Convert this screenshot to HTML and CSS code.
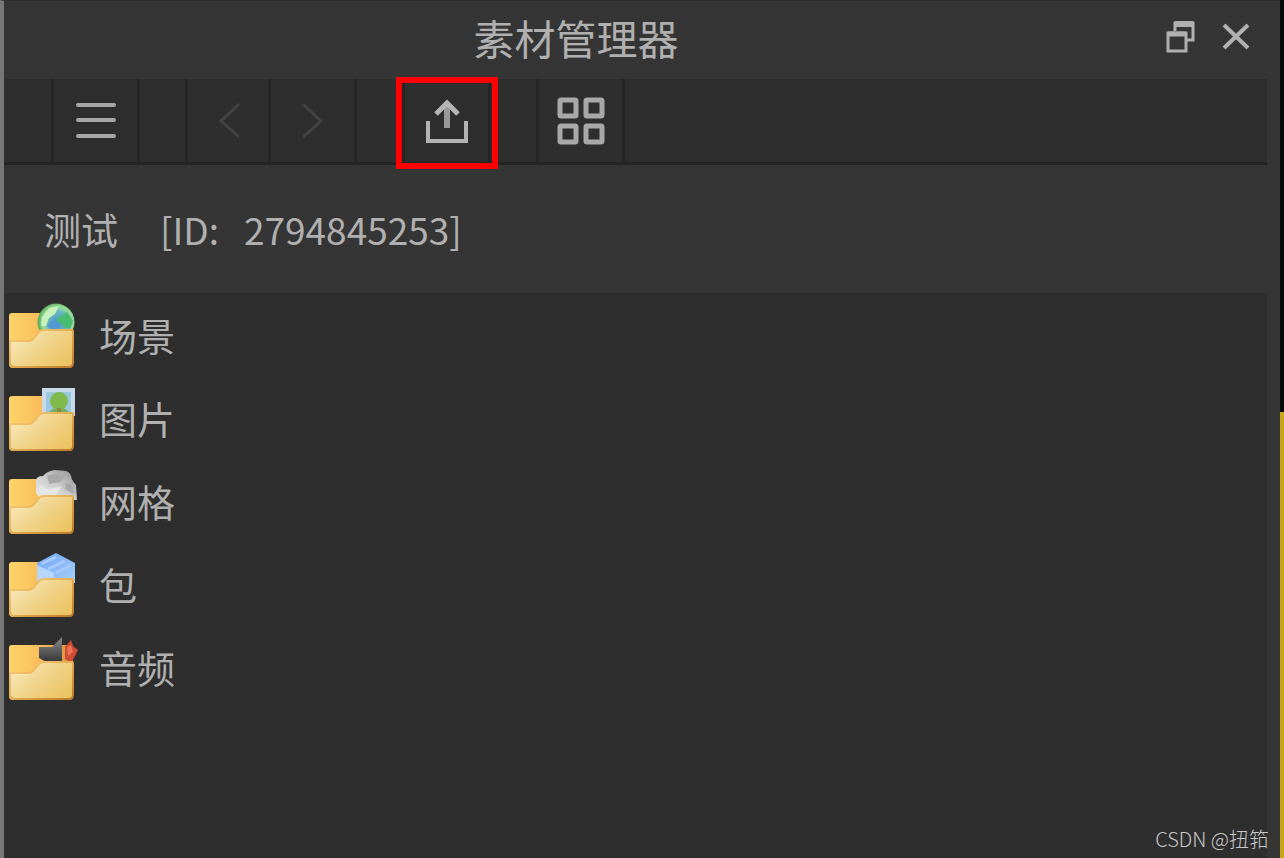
FILE: index.html
```html
<!DOCTYPE html>
<html lang="zh-CN">
<head>
<meta charset="utf-8">
<title>素材管理器</title>
<link rel="stylesheet" href="styles.css">
</head>
<body>
<svg class="defs" aria-hidden="true">
  <defs>
    <linearGradient id="back" x1="0" y1="0" x2="1" y2="0"><stop offset="0" stop-color="#fdd56a"/><stop offset=".5" stop-color="#f9bd59"/><stop offset="1" stop-color="#d98d35"/></linearGradient>
    <linearGradient id="front" x1="0" y1="0" x2="1" y2=".7"><stop offset="0" stop-color="#fbeecb"/><stop offset=".5" stop-color="#f1d690"/><stop offset="1" stop-color="#ecc463"/></linearGradient>
    <linearGradient id="edge" x1="0" y1="0" x2="1" y2="1"><stop offset="0" stop-color="#f7cd7c"/><stop offset=".5" stop-color="#e5ad50"/><stop offset="1" stop-color="#bd7a2a"/></linearGradient>
    <radialGradient id="globe" cx=".55" cy=".5" r=".55"><stop offset="0" stop-color="#4b9ccb"/><stop offset=".5" stop-color="#65b4bd"/><stop offset=".75" stop-color="#9bdd9a"/><stop offset="1" stop-color="#4fa550"/></radialGradient>
    <linearGradient id="stone" x1="0" y1="1" x2="1" y2="0"><stop offset="0" stop-color="#f1f1f1"/><stop offset=".5" stop-color="#cccccc"/><stop offset="1" stop-color="#8f8f8f"/></linearGradient>
    <linearGradient id="box" x1="0" y1="0" x2="1" y2="1"><stop offset="0" stop-color="#6fa5f3"/><stop offset="1" stop-color="#a6cffb"/></linearGradient>
    <linearGradient id="horn" x1="0" y1="0" x2="0" y2="1"><stop offset="0" stop-color="#8a8a8a"/><stop offset="1" stop-color="#333333"/></linearGradient>
    <g id="folder-back"><path d="M4 11h58q3 0 3 3v48q0 4-4 4H5q-4 0-4-4V14q0-3 3-3z" fill="url(#back)"/></g>
    <g id="folder-front"><path d="M2 39h18q4 0 6-3l5-6q2-2 5-2h28q1 0 1 2v31q0 4-4 4H6q-4 0-4-4z" fill="url(#front)" stroke="url(#edge)" stroke-width="2"/></g>
  </defs>
</svg>
<div class="screen">
  <main class="panel">
    <header class="titlebar">
      <h1 class="title">素材管理器</h1>
      <div class="controls">
        <button class="control" type="button" aria-label="还原"><svg width="30" height="34" viewBox="0 0 30 34" fill="none" stroke="#b0b0b0" stroke-width="3"><path d="M9 12V4h18v17h-6"/><path d="M9 5h18" stroke-width="6"/><path d="M2 14h18v18H2z"/><path d="M2 15h18" stroke-width="5"/></svg></button>
        <button class="control" type="button" aria-label="关闭"><svg width="30" height="34" viewBox="0 0 30 34" fill="none" stroke="#b0b0b0" stroke-width="4"><path d="M3 6l24 23M27 6L3 29"/></svg></button>
      </div>
    </header>
    <nav class="toolbar" aria-label="工具栏">
      <span class="spacer"></span>
      <button class="tool" type="button" aria-label="菜单"><svg width="48" height="48" viewBox="0 0 48 48" fill="none" stroke="#a6a6a6" stroke-width="4" stroke-linecap="round"><path d="M6 8h36M6 23h36M6 39h36"/></svg></button>
      <span class="spacer"></span>
      <button class="tool faded" type="button" aria-label="后退"><svg width="48" height="48" viewBox="0 0 48 48" fill="none" stroke="#434343" stroke-width="3"><path d="M35 7L17 24l18 16"/></svg></button>
      <button class="tool" type="button" aria-label="前进"><svg width="48" height="48" viewBox="0 0 48 48" fill="none" stroke="#434343" stroke-width="3"><path d="M14 7l18 17-18 16"/></svg></button>
      <span class="spacer"></span>
      <button class="tool marked" type="button" aria-label="上传"><svg width="48" height="48" viewBox="0 0 48 48" fill="none" stroke="#b4b4b4" stroke-width="5"><path d="M24 31V7" stroke="#999999" stroke-width="6"/><path d="M13 17L24 6l11 11"/><path d="M5 24v20h38V24" stroke-width="4"/></svg></button>
      <span class="spacer"></span>
      <button class="tool" type="button" aria-label="网格视图"><svg width="48" height="48" viewBox="0 0 48 48" fill="none" stroke="#a8a8a8" stroke-width="5"><rect x="3" y="3" width="16" height="16" rx="1"/><rect x="29" y="3" width="16" height="16" rx="1"/><rect x="3" y="29" width="16" height="16" rx="1"/><rect x="29" y="29" width="16" height="16" rx="1"/></svg></button>
    </nav>
    <div class="project"><span>测试</span><span>[ID:&nbsp;&nbsp; 2794845253]</span></div>
    <ul class="assets">
      <li><button class="asset" type="button"><svg width="72" height="66" viewBox="0 0 72 66"><use href="#folder-back"/><circle cx="48" cy="20" r="18.500" fill="url(#globe)"/><path d="M34 15l7-9 10-2-4 8-6 4-3 8h-5z" fill="#c7f0bd"/><path d="M50 16l9-6 6 9-3 8-6-2-3-4-5-2z" fill="#48bd72"/><path d="M39 24l8-8 5 8-5 6z" fill="#5299d4"/><use href="#folder-front"/></svg>场景</button></li>
      <li><button class="asset" type="button"><svg width="72" height="66" viewBox="0 0 72 66"><use href="#folder-back"/><path d="M34 3h33v28H34z" fill="#c8daea"/><path d="M38 7h25v24H38z" fill="#99c8df"/><path d="M39 31q3-8 12-9 9 1 12 9z" fill="#79af64"/><circle cx="51" cy="16" r="9" fill="#80b94d"/><path d="M49 23h4v8h-4z" fill="#8a8b44"/><use href="#folder-front"/></svg>图片</button></li>
      <li><button class="asset" type="button"><svg width="72" height="66" viewBox="0 0 72 66"><use href="#folder-back"/><path d="M28 25V13q0-5 7-5 4-5 12-6l11 1q5 1 6 9l4 5 1 15H34z" fill="url(#stone)"/><path d="M39 8q9-4 18 0l-5 6-11 2zM58 15l6 2 2 9-9-5z" fill="#a8a8a8"/><path d="M31 17l9 4 14-3-6 9H31z" fill="#e5e5e5"/><use href="#folder-front"/></svg>网格</button></li>
      <li><button class="asset" type="button"><svg width="72" height="66" viewBox="0 0 72 66"><use href="#folder-back"/><path d="M29 12L48 2l19 10v20H29z" fill="url(#box)"/><path d="M29 14l17 8v9H29z" fill="#b8d6fa"/><path d="M33 13l15-7M40 18l17-8M48 22l15-8" stroke="#a9cbff" stroke-width="3"/><use href="#folder-front"/></svg>包</button></li>
      <li><button class="asset" type="button"><svg width="72" height="66" viewBox="0 0 72 66"><use href="#folder-back"/><path d="M31 13h13L54 3v26H40l-9-5z" fill="url(#horn)"/><path d="M57 13l6-7 2 6 5 4-3 6-4 7-6-4z" fill="#cf4b32"/><path d="M59 13l4-2 2 7-5 4z" fill="#ed7358"/><use href="#folder-front"/></svg>音频</button></li>
    </ul>
  </main>
  <aside class="backdrop"></aside>
  <p class="watermark">CSDN @扭筘</p>
</div>
</body>
</html>
```
FILE: styles.css
```css
* {
  box-sizing: border-box;
}

body {
  margin: 0;
  background: #353535;
  color: #b0b0b0;
  font-family: "Noto Sans CJK SC", "Noto Sans", sans-serif;
  font-weight: 400;
}

button {
  display: flex;
  align-items: center;
  margin: 0;
  padding: 0;
  border: 0;
  background: none;
  color: inherit;
  font: inherit;
}

svg {
  display: block;
  flex: none;
  overflow: visible;
}

.defs {
  position: absolute;
  width: 0;
  height: 0;
}

.screen {
  position: relative;
  display: flex;
  min-height: 100vh;
}

.panel {
  flex: 1;
  display: flex;
  flex-direction: column;
  border-left: 4px solid #777777;
  border-top: 1px solid #2e2e2e;
  background: #353535;
}

.titlebar {
  display: flex;
  align-items: center;
  height: 78px;
  padding-bottom: 6px;
}

.title {
  flex: 1;
  margin: 0;
  font-size: 41px;
  font-weight: 400;
  line-height: 60px;
  text-align: center;
}

.controls {
  display: flex;
  gap: 25px;
  padding: 0 29px 2px 18px;
}

.toolbar {
  display: flex;
  height: 86px;
  margin-right: 13px;
  padding-left: 2px;
  border-bottom: 3px solid #242424;
  background: #2e2e2e;
}

.spacer {
  width: 48px;
  border-right: 3px solid #252525;
}

.tool {
  justify-content: center;
  width: 86px;
  border-right: 3px solid #252525;
}

.faded {
  width: 83px;
}

.marked {
  position: relative;
}

.marked::after {
  content: "";
  position: absolute;
  inset: -2px -10px -7px -9px;
  border: 6px solid #ff0000;
}

.project {
  display: flex;
  align-items: center;
  gap: 42px;
  height: 128px;
  padding: 0 40px;
  font-size: 37px;
}

.assets {
  flex: 1;
  margin: 0 13px 0 0;
  padding: 0;
  background: #2e2e2e;
  list-style: none;
}

.asset {
  gap: 19px;
  width: 100%;
  height: 83px;
  padding-left: 4px;
  font-size: 38px;
}

.backdrop {
  width: 4px;
  background: linear-gradient(#050a08 48%, #c9a71c 48%);
}

.watermark {
  position: absolute;
  right: 15px;
  bottom: 4px;
  margin: 0;
  color: #c8c8c8;
  font-size: 20px;
  font-weight: 300;
  line-height: 30px;
}
```
